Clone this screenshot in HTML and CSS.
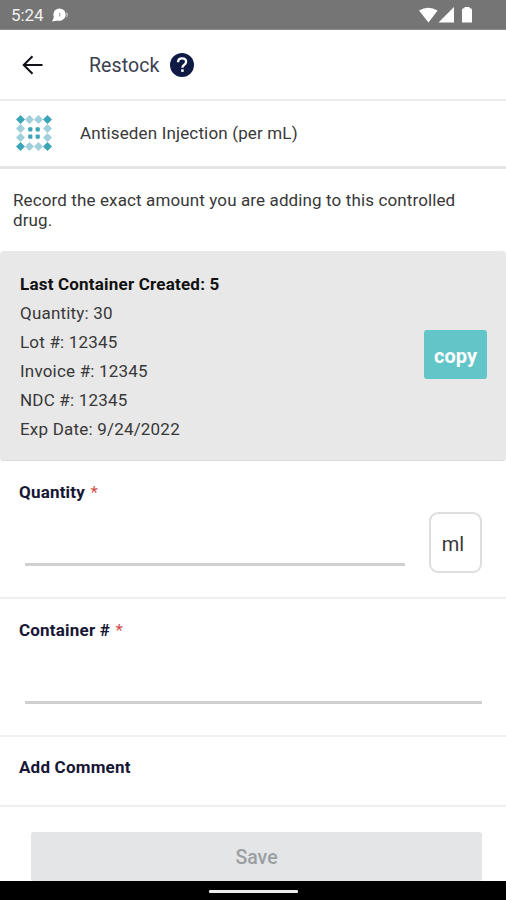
FILE: index.html
```html
<!DOCTYPE html>
<html lang="en">
<head>
<meta charset="utf-8">
<title>Restock</title>
<link rel="stylesheet" href="styles.css">
</head>
<body>
<div class="screen">
  <div class="status">
    <span class="time">5:24</span>
    <svg class="notice" width="18" height="16" viewBox="0 0 18 16"><circle cx="7.500" cy="6.700" r="6.200" fill="#fff"/><path d="M2.500 8 0 13.500l6-1z" fill="#fff"/><path d="M13.500 4a6 6 0 0 1 0 5.500l2.500-1V5z" fill="#aaa"/><path d="M7.700 5v3.500" stroke="#aaa" stroke-width="1.300"/></svg>
    <svg class="signals" width="56" height="18" viewBox="0 0 56 18"><path d="M0 3.500Q9.300-2.200 18.600 3.500L9.500 15.500z" fill="#fff"/><path d="M35 0v15.500H19.500z" fill="#fff"/><path d="M45.500 0h5v1.300h1q1.500 0 1.500 1.500v12.700H43V2.800q0-1.500 1.500-1.500h1z" fill="#fff"/></svg>
  </div>
  <header class="header">
    <svg class="back" width="22" height="20" viewBox="0 0 22 20"><path d="M20.500 10H2M10.500 1.200 1.700 10l8.800 8.800" fill="none" stroke="#111118" stroke-width="2"/></svg>
    <h1 class="title">Restock</h1>
    <svg class="help" width="24" height="24" viewBox="0 0 24 24"><circle cx="12" cy="12" r="12" fill="#101b45"/><path d="M8 9.300c0-2.500 1.700-4 4.100-4s4 1.400 4 3.500c0 1.600-.9 2.400-2.100 3.200-1 .7-1.600 1.400-1.600 2.800" fill="none" stroke="#fff" stroke-width="2.300"/><rect x="11.200" y="16.300" width="2.500" height="2.600" fill="#fff"/></svg>
  </header>
  <div class="drug">
    <svg class="logo" width="36" height="36" viewBox="0 0 36 36">
      <g fill="#9fd0db"><path d="m13.500 0 4.500 4.500L13.500 9 9 4.500zM22.500 0 27 4.500 22.500 9 18 4.500zM13.500 27l4.500 4.500-4.500 4.500L9 31.500zM22.500 27l4.500 4.500-4.500 4.500-4.500-4.500zM4.500 9 9 13.500 4.500 18 0 13.500zM4.500 18 9 22.500 4.500 27 0 22.500zM31.500 9l4.500 4.500-4.500 4.500-4.500-4.500zM31.500 18l4.500 4.500-4.500 4.500-4.500-4.500z"/></g>
      <g fill="#3da5b8"><path d="M4.500 0 9 4.500 4.500 9 0 4.500zM31.500 0 36 4.500 31.500 9 27 4.500zM4.500 27 9 31.500 4.500 36 0 31.500zM31.500 27l4.500 4.500-4.500 4.500-4.500-4.500z"/><rect x="12.200" y="12.200" width="4.200" height="4.200" rx="1"/><rect x="19.600" y="12.200" width="4.200" height="4.200" rx="1"/><rect x="12.200" y="19.600" width="4.200" height="4.200" rx="1"/><rect x="19.600" y="19.600" width="4.200" height="4.200" rx="1"/></g>
    </svg>
    <span class="drug-name">Antiseden Injection (per mL)</span>
  </div>
  <p class="intro">Record the exact amount you are adding to this controlled drug.</p>
  <section class="card">
    <div class="details">
      <strong>Last Container Created: 5</strong>
      <span>Quantity: 30</span>
      <span>Lot #: 12345</span>
      <span>Invoice #: 12345</span>
      <span>NDC #: 12345</span>
      <span>Exp Date: 9/24/2022</span>
    </div>
    <button class="copy">copy</button>
  </section>
  <section class="field">
    <h2 class="label">Quantity <span class="req">*</span></h2>
    <div class="entry"><div class="line"></div><div class="unit">ml</div></div>
  </section>
  <section class="field">
    <h2 class="label">Container # <span class="req">*</span></h2>
    <div class="entry"><div class="line"></div></div>
  </section>
  <section class="comment"><h2 class="label">Add Comment</h2></section>
  <div class="actions"><button class="save">Save</button></div>
  <div class="nav"><div class="pill"></div></div>
</div>
</body>
</html>
```
FILE: styles.css
```css
* { box-sizing: border-box; }
body { margin: 0; background: #fff; font-family: Roboto, sans-serif; color: #383838; }
h1, h2, p { margin: 0; }
button { border: 0; padding: 0; font-family: inherit; }
svg { display: block; flex: none; }
.screen { width: 506px; height: 900px; overflow: hidden; display: flex; flex-direction: column; }
.screen > * { flex: none; }

.status { height: 30px; background: #757575; border-bottom: 1px solid #8b8b8b; display: flex; align-items: center; padding: 1px 31px 0 11px; color: #f0f0f0; }
.time { font-size: 17px; letter-spacing: -0.1px; width: 41px; white-space: nowrap; }
.notice { margin-top: 2px; }
.signals { margin-left: auto; margin-top: 2px; }

.header { height: 71px; border-bottom: 2px solid #ebebeb; display: flex; align-items: center; padding-left: 22px; }
.title { width: 81px; margin-left: 45px; margin-top: 2px; font-size: 19.5px; font-weight: 400; color: #3b3f50; letter-spacing: 0.1px; white-space: nowrap; }

.drug { height: 68px; border-bottom: 3px solid #e6e6e6; display: flex; align-items: center; padding-left: 16px; }
.logo { margin-top: -1px; }
.drug-name { margin: -2px 0 0 28px; font-size: 17px; letter-spacing: 0.15px; white-space: nowrap; }

.intro { height: 82px; padding: 21px 30px 0 13px; font-size: 17px; line-height: 20px; letter-spacing: 0.12px; }

.card { height: 210px; background: #e8e8e8; border-bottom: 1px solid #dcdcdc; border-radius: 4px; padding: 19px 19px 0 20px; display: flex; justify-content: space-between; }
.details { display: flex; flex-direction: column; font-size: 17px; line-height: 29px; letter-spacing: 0.2px; white-space: nowrap; }
.details strong { color: #111; font-weight: 700; }
.copy { width: 63px; height: 49px; margin-top: 60px; padding-top: 2px; border-radius: 3px; background: #62c5c8; color: #fff; font-size: 20px; font-weight: 700; }

.field { height: 138px; border-bottom: 2px solid #f0f0f0; padding: 19px 24px 0 19px; }
.label { font-size: 17px; line-height: 24px; font-weight: 700; color: #171735; letter-spacing: 0.2px; white-space: nowrap; }
.req { color: #d34b4b; font-weight: 400; margin-left: 1px; }
.entry { display: flex; align-items: flex-start; height: 61px; margin: 8px 0 0 6px; }
.line { flex: 1; height: 3px; margin-top: 51px; background: #cfd1d1; }
.unit { width: 53px; height: 61px; margin-left: 24px; border: 2px solid #dedede; border-radius: 9px; display: flex; align-items: center; justify-content: center; padding: 3px 5px 0 0; font-size: 20px; }

.comment { height: 70px; border-bottom: 2px solid #f0f0f0; padding: 18px 19px 0; }
.actions { height: 74px; padding: 25px 24px 0 31px; }
.save { display: block; width: 100%; height: 49px; padding-top: 2px; border-radius: 3px; background: #e3e5e6; color: #9b9fa1; font-size: 19.5px; font-weight: 500; }
.nav { height: 19px; background: #000; display: flex; justify-content: center; padding-top: 9px; }
.pill { width: 89px; height: 3px; background: #eee; border-radius: 1px; }
```
